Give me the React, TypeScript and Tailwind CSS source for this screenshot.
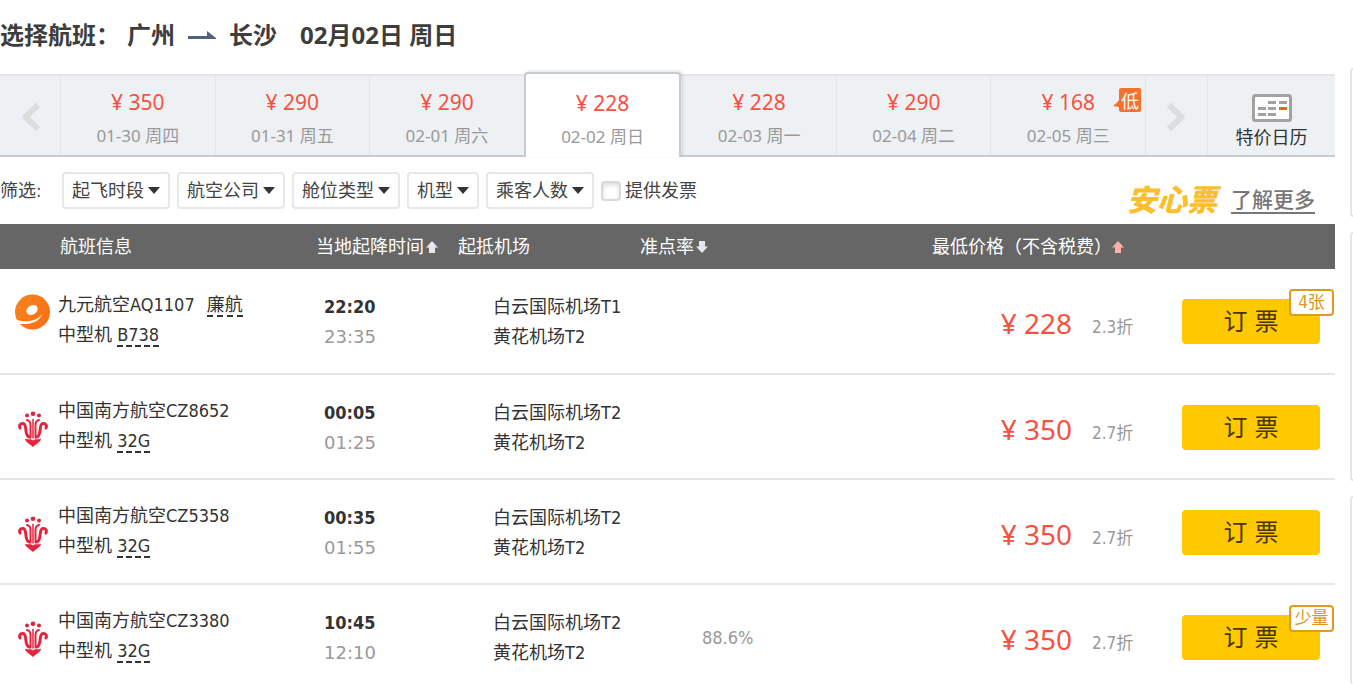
import { clsx } from "clsx";

const days = [
  { price: 350, date: "01-30", week: "周四" },
  { price: 290, date: "01-31", week: "周五" },
  { price: 290, date: "02-01", week: "周六" },
  { price: 228, date: "02-02", week: "周日", active: true },
  { price: 228, date: "02-03", week: "周一" },
  { price: 290, date: "02-04", week: "周二" },
  { price: 168, date: "02-05", week: "周三", lowest: true },
];

const filters = ["起飞时段", "航空公司", "舱位类型", "机型", "乘客人数"];

const flights = [
  {
    logo: "jiuyuan",
    airline: "九元航空",
    no: "AQ1107",
    tag: "廉航",
    plane: "B738",
    depart: "22:20",
    arrive: "23:35",
    from: "白云国际机场T1",
    to: "黄花机场T2",
    rate: "",
    price: 228,
    discount: "2.3折",
    left: "4张",
  },
  {
    logo: "southern",
    airline: "中国南方航空",
    no: "CZ8652",
    plane: "32G",
    depart: "00:05",
    arrive: "01:25",
    from: "白云国际机场T2",
    to: "黄花机场T2",
    rate: "",
    price: 350,
    discount: "2.7折",
  },
  {
    logo: "southern",
    airline: "中国南方航空",
    no: "CZ5358",
    plane: "32G",
    depart: "00:35",
    arrive: "01:55",
    from: "白云国际机场T2",
    to: "黄花机场T2",
    rate: "",
    price: 350,
    discount: "2.7折",
  },
  {
    logo: "southern",
    airline: "中国南方航空",
    no: "CZ3380",
    plane: "32G",
    depart: "10:45",
    arrive: "12:10",
    from: "白云国际机场T2",
    to: "黄花机场T2",
    rate: "88.6%",
    price: 350,
    discount: "2.7折",
    left: "少量",
  },
];

function JiuyuanLogo() {
  return (
    <svg viewBox="0 0 36 36" className="h-9 w-9" aria-hidden="true">
      <defs>
        <linearGradient id="jiuyuan" x1="0" y1="0" x2="1" y2="1">
          <stop offset="0" stopColor="#f5851f" />
          <stop offset="1" stopColor="#fb6d12" />
        </linearGradient>
      </defs>
      <circle cx="17.5" cy="18" r="17.5" fill="url(#jiuyuan)" />
      <ellipse
        cx="17"
        cy="16"
        rx="6"
        ry="4.5"
        fill="#fff"
        transform="rotate(-30 17 16)"
      />
      <path
        d="M0 25.500C11 29 22 27.500 27 20C25 28 14 31.500 3.500 29.500L1 28Z"
        fill="#fff"
      />
    </svg>
  );
}

function SouthernLogo() {
  return (
    <svg viewBox="0 0 30 36" className="h-9 w-[30px]" aria-hidden="true">
      <g fill="none" stroke="#e3243f" strokeLinecap="round">
        <path d="M11.500 26C5.500 25 10 13 5 12.500C2 12.300 1 14.500 2 17" strokeWidth="3" />
        <path d="M18.500 26C24.500 25 20 13 25 12.500C28 12.300 29 14.500 28 17" strokeWidth="3" />
        <path d="M12.500 26.500V14C12.500 11 11.500 9.500 9 9" strokeWidth="2" />
        <path d="M17.500 26.500V14C17.500 11 18.500 9.500 21 9" strokeWidth="2" />
        <path d="M15 27V8.500" strokeWidth="1.500" />
      </g>
      <g fill="#e3243f">
        <circle cx="15" cy="2.800" r="2.300" />
        <circle cx="9" cy="4.500" r="2" />
        <circle cx="21" cy="4.500" r="2" />
        <path d="M7 27.500C10 29.500 12 27 15 29.500C18 27 20 29.500 23 27.500C23 31 18.500 32.500 15 36C11.500 32.500 7 31 7 27.500Z" />
      </g>
    </svg>
  );
}

function Chevron({ flip = false }: { flip?: boolean }) {
  return (
    <svg
      viewBox="0 0 20 30"
      className={clsx("mt-0.5 h-[30px] w-5", flip && "-scale-x-100")}
      fill="none"
      stroke="#dcdddd"
      strokeWidth="6"
      strokeLinejoin="round"
      aria-hidden="true"
    >
      <path d="M18 3L5.500 15L18 27" />
    </svg>
  );
}

function SortArrow({ down = false, color }: { down?: boolean; color: string }) {
  return (
    <svg
      viewBox="0 0 12 12"
      className={clsx("h-3 w-3", down && "rotate-180")}
      aria-hidden="true"
    >
      <path d="M6 0L12 6.500H9V12H3V6.500H0Z" fill={color} />
    </svg>
  );
}

function CalendarIcon() {
  return (
    <svg viewBox="0 0 40 28" className="h-7 w-10" aria-hidden="true">
      <rect x="1.500" y="1.500" width="37" height="25" rx="2" fill="#fff" stroke="#a2a2a2" strokeWidth="3" />
      <g fill="#a2a2a2">
        <rect x="16" y="7" width="8" height="3" />
        <rect x="27" y="7" width="8" height="3" />
        <rect x="6" y="13" width="8" height="3" />
        <rect x="16" y="13" width="8" height="3" />
        <rect x="6" y="19" width="8" height="3" />
        <rect x="16" y="19" width="8" height="3" />
      </g>
      <rect x="27" y="13" width="8" height="3" fill="#f0622d" />
    </svg>
  );
}

function DateBar() {
  return (
    <nav className="flex h-[83px] border-t-2 border-b-2 border-t-[#e3e6e9] border-b-[#c5ccd2] bg-[#edf1f4]">
      <button type="button" aria-label="前一天" className="flex w-[60px] items-center justify-center">
        <Chevron />
      </button>
      {days.map((day) => (
        <button
          key={day.date}
          type="button"
          className={clsx(
            "relative flex min-w-0 flex-1 flex-col items-center",
            day.active
              ? "-mt-1 -mb-0.5 rounded-t border-2 border-b-0 border-[#c5ccd2] bg-white pt-[13px] shadow-[2px_-1px_3px_rgba(0,0,0,0.12)]"
              : "border-l border-[#e1e6e9] pt-2.5"
          )}
        >
          <span className="text-[21px] leading-8 text-[#f8513f]">
            ¥ {day.price}
          </span>
          <span className="mt-1 text-[17px] leading-7 text-[#999]">
            {day.date} {day.week}
          </span>
          {day.lowest && (
            <span className="absolute top-3 right-1 flex h-6 w-7 items-center justify-end">
              <svg viewBox="0 0 28 24" className="absolute inset-0" aria-hidden="true">
                <path d="M8 0H26Q28 0 28 2V22Q28 24 26 24H8Q6 24 6 22V19L0 18Q4 15 6 12V2Q6 0 8 0Z" fill="#f7702c" />
              </svg>
              <span className="relative pt-0.5 pr-0.5 text-lg leading-6 text-white">低</span>
            </span>
          )}
        </button>
      ))}
      <button type="button" aria-label="后一天" className="flex w-[62px] items-center justify-center border-l border-[#e1e6e9]">
        <Chevron flip />
      </button>
      <button type="button" className="flex w-32 flex-col items-center border-l border-[#e1e6e9] pt-[18px] text-lg text-[#333]">
        <CalendarIcon />
        <span className="leading-[30px]">特价日历</span>
      </button>
    </nav>
  );
}

function FilterBar() {
  return (
    <div className="flex h-[67px] items-start justify-between pr-5">
      <div className="flex items-center gap-[7px] pt-[15px] text-lg text-[#444]">
        <span className="w-[55px] whitespace-nowrap">筛选:</span>
        {filters.map((name) => (
          <div key={name} className="relative">
            <select
              aria-label={name}
              className="h-[37px] appearance-none rounded border-2 border-[#e6e7ec] bg-white pr-6 pl-2 text-lg leading-8"
            >
              <option>{name}</option>
            </select>
            <svg viewBox="0 0 12 7" className="pointer-events-none absolute top-[15px] right-2.5 h-[7px] w-3" aria-hidden="true">
              <path d="M0 0H12L6 7Z" fill="#333" />
            </svg>
          </div>
        ))}
        <label className="flex items-center gap-1">
          <input
            type="checkbox"
            className="h-5 w-5 appearance-none rounded border-2 border-[#d8d9dc] bg-white shadow-[inset_0_2px_4px_rgba(0,0,0,0.15)]"
          />
          提供发票
        </label>
      </div>
      <div className="flex items-center gap-3.5 pt-6">
        <span className="text-[30px] leading-10 font-black text-[#fbbf2d] italic">安心票</span>
        <a href="#more" className="border-b-2 border-[#777] text-[21px] leading-6 font-medium text-[#777]">
          了解更多
        </a>
      </div>
    </div>
  );
}

function FlightTable() {
  return (
    <table className="w-full table-fixed border-collapse text-left text-lg text-[#333]">
      <colgroup>
        <col className="w-[316px]" />
        <col className="w-[142px]" />
        <col className="w-[182px]" />
        <col />
        <col className="w-[403px]" />
      </colgroup>
      <thead>
        <tr className="h-[45px] bg-[#666] text-white">
          <th className="pl-[60px] font-normal">航班信息</th>
          <th className="font-normal">
            <span className="flex items-center gap-0.5">
              当地起降时间
              <SortArrow color="#e6e6ee" />
            </span>
          </th>
          <th className="font-normal">起抵机场</th>
          <th className="font-normal">
            <span className="flex items-center gap-0.5">
              准点率
              <SortArrow down color="#e6e6ee" />
            </span>
          </th>
          <th className="font-normal">
            <span className="flex items-center">
              最低价格（不含税费）
              <SortArrow color="#ffb0a6" />
            </span>
          </th>
        </tr>
      </thead>
      <tbody>
        {flights.map((flight) => (
          <tr key={flight.no} className="h-[105px] border-b-2 border-[#e6e6e6] align-top">
            <td className="pt-[21px] pl-[15px]">
              <div className="flex gap-[7px]">
                <div className={clsx("flex w-9 justify-center", flight.logo === "jiuyuan" ? "pt-1" : "pt-[15px]")}>
                  {flight.logo === "jiuyuan" ? <JiuyuanLogo /> : <SouthernLogo />}
                </div>
                <div className="leading-[30px]">
                  <div>
                    {flight.airline}
                    {flight.no}
                    {flight.tag && (
                      <span className="ml-3 border-b-2 border-dashed border-[#333]">{flight.tag}</span>
                    )}
                  </div>
                  <div>
                    中型机 <span className="border-b-2 border-dashed border-[#333]">{flight.plane}</span>
                  </div>
                </div>
              </div>
            </td>
            <td className="pt-[23px] pl-2 leading-[30px]">
              <div className="font-bold">{flight.depart}</div>
              <div className="font-['DejaVu_Sans',sans-serif] text-[#999]">{flight.arrive}</div>
            </td>
            <td className="pt-[23px] pl-[35px] leading-[30px] whitespace-nowrap">
              <div>{flight.from}</div>
              <div>{flight.to}</div>
            </td>
            <td className="pt-[38px] pl-[62px] leading-[30px] text-[#999]">{flight.rate}</td>
            <td className="pt-[30px]">
              <div className="flex items-start justify-end pr-[15px]">
                <span className="pt-0.5 font-['Noto_Sans','Noto_Sans_CJK_SC',sans-serif] text-[28px] leading-[45px] text-[#f8513f]">
                  ¥ {flight.price}
                </span>
                <span className="w-[110px] pt-1.5 pl-5 text-[17px] leading-[45px] text-[#999]">{flight.discount}</span>
                <div className="relative">
                  <button
                    type="button"
                    className="h-[45px] w-[138px] rounded bg-[#ffc900] text-2xl text-[#4a3500]"
                  >
                    订 票
                  </button>
                  {flight.left && (
                    <span className="absolute -top-2.5 -right-3.5 flex h-[27px] w-[45px] items-center justify-center rounded-sm border-2 border-[#e09a24] bg-white text-[17px] text-[#dd9420]">
                      {flight.left}
                    </span>
                  )}
                </div>
              </div>
            </td>
          </tr>
        ))}
      </tbody>
    </table>
  );
}

export default function App() {
  return (
    <div className="flex h-screen gap-[15px] overflow-hidden bg-white font-['DejaVu_Sans_Condensed','Noto_Sans_CJK_SC',sans-serif]">
      <main className="min-w-0 flex-1">
        <h1 className="flex h-[74px] items-center pb-1 font-['Noto_Sans','Noto_Sans_CJK_SC',sans-serif] text-2xl font-bold text-[#3d3d3d]">
          <span>选择航班：</span>
          <span className="ml-[7px]">广州</span>
          <svg viewBox="0 0 28 10" className="mx-[13px] h-2.5 w-7" aria-hidden="true">
            <path d="M0 6H19V1L28 8V9H0Z" fill="#4e6479" />
          </svg>
          <span>长沙</span>
          <span className="ml-[23px]">02月02日 周日</span>
        </h1>
        <div className="font-['Noto_Sans','Noto_Sans_CJK_SC',sans-serif]">
          <DateBar />
        </div>
        <FilterBar />
        <FlightTable />
      </main>
      <aside className="flex w-[3px] flex-col gap-[15px] pt-[68px]">
        <div className="h-[149px] rounded-l border-2 border-r-0 border-[#e6e6e6]" />
        <div className="h-[249px] rounded-l border-2 border-r-0 border-[#e6e6e6]" />
        <div className="flex-1 rounded-l border-2 border-r-0 border-b-0 border-[#e6e6e6]" />
      </aside>
    </div>
  );
}
